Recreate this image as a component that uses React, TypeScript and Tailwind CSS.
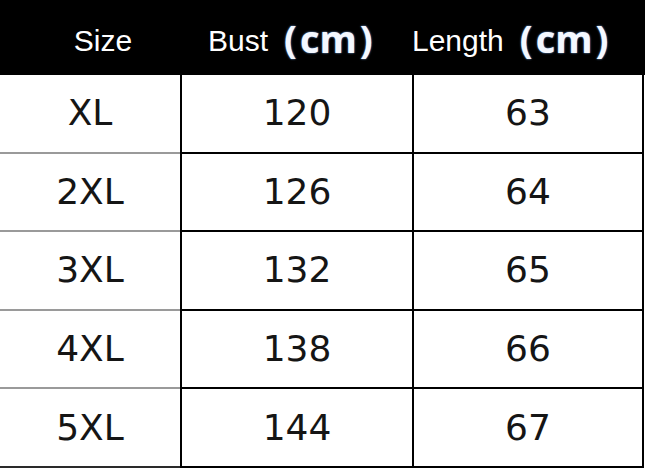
const ROWS = [
  { size: "XL", bust: "120", length: "63" },
  { size: "2XL", bust: "126", length: "64" },
  { size: "3XL", bust: "132", length: "65" },
  { size: "4XL", bust: "138", length: "66" },
  { size: "5XL", bust: "144", length: "67" },
];

function Cm() {
  return (
    <span className="ml-[16px] inline-flex items-center font-['Open_Sans',sans-serif] text-[38px] leading-none font-bold text-[#f4f8ff] [text-shadow:0_0_2px_#7fb4ff]">
      <span>(</span>
      <span className="mx-[3px]">cm</span>
      <span>)</span>
    </span>
  );
}

export default function App() {
  return (
    <div className="h-[476px] w-[645px] overflow-hidden bg-white">
      {/* header */}
      <div className="grid h-[75px] grid-cols-[180px_232px_233px] items-center bg-black font-['Liberation_Sans',Arial,sans-serif] text-[30px] text-white">
        <div className="flex justify-center pl-[26px] pt-[6px]">Size</div>
        <div className="flex items-center justify-start pl-[28px]">
          <span className="pt-[6px]">Bust</span>
          <Cm />
        </div>
        <div className="flex items-center justify-start">
          <span className="pt-[6px]">Length</span>
          <Cm />
        </div>
      </div>

      {/* rows */}
      {ROWS.map((row, i) => {
        const last = i === ROWS.length - 1;
        return (
          <div
            key={row.size}
            className="grid h-[78.6px] grid-cols-[180px_232px_232px] font-['DejaVu_Sans',Verdana,sans-serif] text-[36px] text-[#151515]"
          >
            <div
              className={`flex items-center justify-center border-b-2 ${last ? "border-[#2a2a2a]" : "border-[#9a9a9a]"}`}
            >
              {row.size}
            </div>
            <div className="flex items-center justify-center border-b-2 border-l-2 border-black">
              {row.bust}
            </div>
            <div className="flex items-center justify-center border-b-2 border-l-2 border-r-2 border-black">
              {row.length}
            </div>
          </div>
        );
      })}
    </div>
  );
}
